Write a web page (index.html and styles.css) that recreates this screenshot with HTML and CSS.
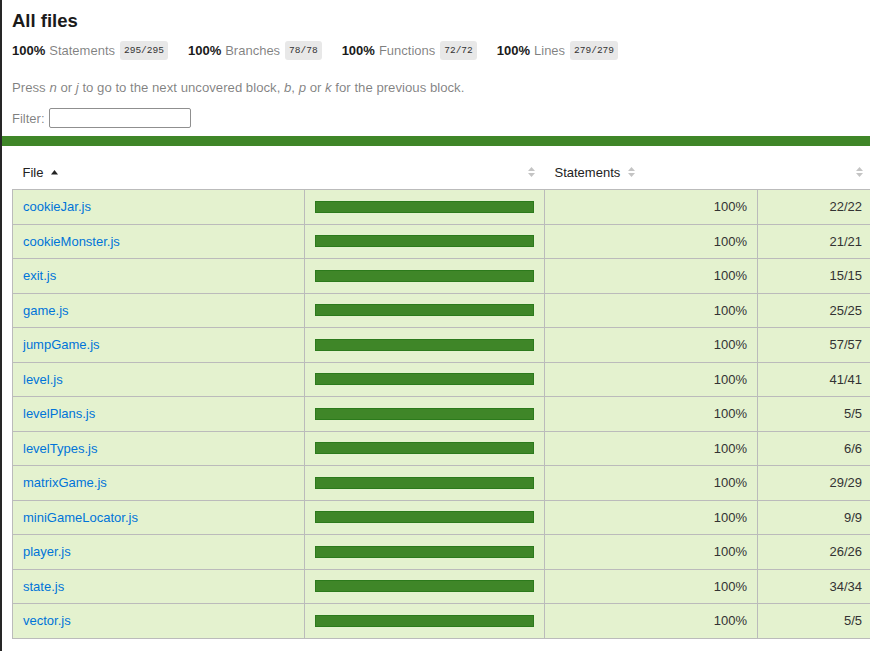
FILE: index.html
```html
<!DOCTYPE html>
<html lang="en">
<head>
<meta charset="utf-8">
<title>Code coverage report for All files</title>
<link rel="stylesheet" href="styles.css">
</head>
<body>
<div class="wrapper">
  <div class="header">
    <h1>All files</h1>
    <div class="stats">
      <div class="stat"><span class="strong">100%</span><span class="quiet">Statements</span><span class="fraction">295/295</span></div>
      <div class="stat"><span class="strong">100%</span><span class="quiet">Branches</span><span class="fraction">78/78</span></div>
      <div class="stat"><span class="strong">100%</span><span class="quiet">Functions</span><span class="fraction">72/72</span></div>
      <div class="stat"><span class="strong">100%</span><span class="quiet">Lines</span><span class="fraction">279/279</span></div>
    </div>
    <p class="quiet hint">Press <em>n</em> or <em>j</em> to go to the next uncovered block, <em>b</em>, <em>p</em> or <em>k</em> for the previous block.</p>
    <div class="filter"><label class="quiet" for="search">Filter:</label><input id="search" class="search" type="search"></div>
  </div>
  <div class="status-line"></div>
  <div class="table-wrap">
    <table class="summary">
      <colgroup>
        <col class="c-file"><col class="c-pic"><col class="c-pct"><col class="c-abs">
      </colgroup>
      <thead>
        <tr>
          <th class="file">File <svg class="sorted" width="7" height="5" viewBox="0 0 7 5"><path d="M3.5 0L7 4.5H0z" fill="#222"/></svg></th>
          <th class="pic"><svg class="sorter" width="7" height="10" viewBox="0 0 7 10"><path d="M3.5 0L7 4H0zM3.5 10L0 6h7z" fill="#c4c4c4"/></svg></th>
          <th class="pct">Statements <svg class="sorter" width="7" height="10" viewBox="0 0 7 10"><path d="M3.5 0L7 4H0zM3.5 10L0 6h7z" fill="#c4c4c4"/></svg></th>
          <th class="abs"><svg class="sorter" width="7" height="10" viewBox="0 0 7 10"><path d="M3.5 0L7 4H0zM3.5 10L0 6h7z" fill="#c4c4c4"/></svg></th>
        </tr>
      </thead>
      <tbody>
        <tr><td class="file"><a href="#">cookieJar.js</a></td><td class="pic"><div class="chart"><div class="fill"></div></div></td><td class="pct">100%</td><td class="abs">22/22</td></tr>
        <tr><td class="file"><a href="#">cookieMonster.js</a></td><td class="pic"><div class="chart"><div class="fill"></div></div></td><td class="pct">100%</td><td class="abs">21/21</td></tr>
        <tr><td class="file"><a href="#">exit.js</a></td><td class="pic"><div class="chart"><div class="fill"></div></div></td><td class="pct">100%</td><td class="abs">15/15</td></tr>
        <tr><td class="file"><a href="#">game.js</a></td><td class="pic"><div class="chart"><div class="fill"></div></div></td><td class="pct">100%</td><td class="abs">25/25</td></tr>
        <tr><td class="file"><a href="#">jumpGame.js</a></td><td class="pic"><div class="chart"><div class="fill"></div></div></td><td class="pct">100%</td><td class="abs">57/57</td></tr>
        <tr><td class="file"><a href="#">level.js</a></td><td class="pic"><div class="chart"><div class="fill"></div></div></td><td class="pct">100%</td><td class="abs">41/41</td></tr>
        <tr><td class="file"><a href="#">levelPlans.js</a></td><td class="pic"><div class="chart"><div class="fill"></div></div></td><td class="pct">100%</td><td class="abs">5/5</td></tr>
        <tr><td class="file"><a href="#">levelTypes.js</a></td><td class="pic"><div class="chart"><div class="fill"></div></div></td><td class="pct">100%</td><td class="abs">6/6</td></tr>
        <tr><td class="file"><a href="#">matrixGame.js</a></td><td class="pic"><div class="chart"><div class="fill"></div></div></td><td class="pct">100%</td><td class="abs">29/29</td></tr>
        <tr><td class="file"><a href="#">miniGameLocator.js</a></td><td class="pic"><div class="chart"><div class="fill"></div></div></td><td class="pct">100%</td><td class="abs">9/9</td></tr>
        <tr><td class="file"><a href="#">player.js</a></td><td class="pic"><div class="chart"><div class="fill"></div></div></td><td class="pct">100%</td><td class="abs">26/26</td></tr>
        <tr><td class="file"><a href="#">state.js</a></td><td class="pic"><div class="chart"><div class="fill"></div></div></td><td class="pct">100%</td><td class="abs">34/34</td></tr>
        <tr><td class="file"><a href="#">vector.js</a></td><td class="pic"><div class="chart"><div class="fill"></div></div></td><td class="pct">100%</td><td class="abs">5/5</td></tr>
      </tbody>
    </table>
  </div>
</div>
</body>
</html>
```

FILE: styles.css
```css
html, body {
  margin: 0;
  padding: 0;
}

body {
  font-family: "Liberation Sans", Arial, Helvetica, sans-serif;
  font-size: 13px;
  color: #333;
  background: #fff;
}

.wrapper {
  border-left: 2px solid #262626;
  min-height: 651px;
  box-sizing: border-box;
  overflow: hidden;
}

.header {
  padding: 10px 10px 8px;
}

h1 {
  margin: 0;
  font-size: 18.5px;
  line-height: 22px;
  font-weight: bold;
  color: #1a1a1a;
}

.stats {
  display: flex;
  gap: 20px;
  margin-top: 9px;
  height: 19px;
  align-items: center;
}

.stat {
  display: flex;
  align-items: center;
}

.strong {
  font-weight: bold;
  color: #1a1a1a;
  margin-right: 4px;
}

.quiet {
  color: rgba(0, 0, 0, 0.5);
}

.fraction {
  font-family: "Liberation Mono", "DejaVu Sans Mono", monospace;
  font-size: 9.5px;
  line-height: 11px;
  color: #333;
  background: #e8e8e8;
  padding: 4px 4px;
  border-radius: 3px;
  margin-left: 5px;
}

.hint {
  margin: 20px 0 0;
  line-height: 15px;
  font-size: 13.2px;
}

.filter {
  display: flex;
  align-items: center;
  margin-top: 13px;
  height: 20px;
}

.filter label {
  margin-right: 4px;
}

.search {
  width: 142px;
  height: 20px;
  box-sizing: border-box;
  border: 1px solid #8f8f8f;
  border-radius: 2px;
  padding: 1px 4px;
  margin: 0;
  font: inherit;
  background: #fff;
}

.status-line {
  height: 10px;
  background: #3f8628;
}

.table-wrap {
  padding: 9.5px 0 0 10px;
  overflow: hidden;
}

.summary {
  border-collapse: collapse;
  table-layout: fixed;
  width: 860px;
}

.c-file { width: 292px; }
.c-pic { width: 240px; }
.c-pct { width: 213px; }
.c-abs { width: 115px; }

.summary th {
  font-weight: normal;
  text-align: left;
  padding: 10px;
  line-height: 13.5px;
  color: #222;
  white-space: nowrap;
}

.summary th.pic,
.summary th.abs {
  text-align: right;
}

.sorter,
.sorted {
  vertical-align: middle;
  margin-left: 4px;
  position: relative;
  top: -1px;
}

.summary td {
  border: 1px solid #bbb;
  background: #e4f2cf;
  padding: 10px;
  line-height: 13.5px;
  vertical-align: middle;
  white-space: nowrap;
}

.summary td.pct,
.summary td.abs {
  text-align: right;
}

.summary td.file a {
  color: #0074d9;
  text-decoration: none;
}

.chart {
  height: 10px;
  border: 1px solid #2c7a1c;
  background: #fff;
}

.fill {
  height: 100%;
  width: 100%;
  background: #3f8628;
}
```
